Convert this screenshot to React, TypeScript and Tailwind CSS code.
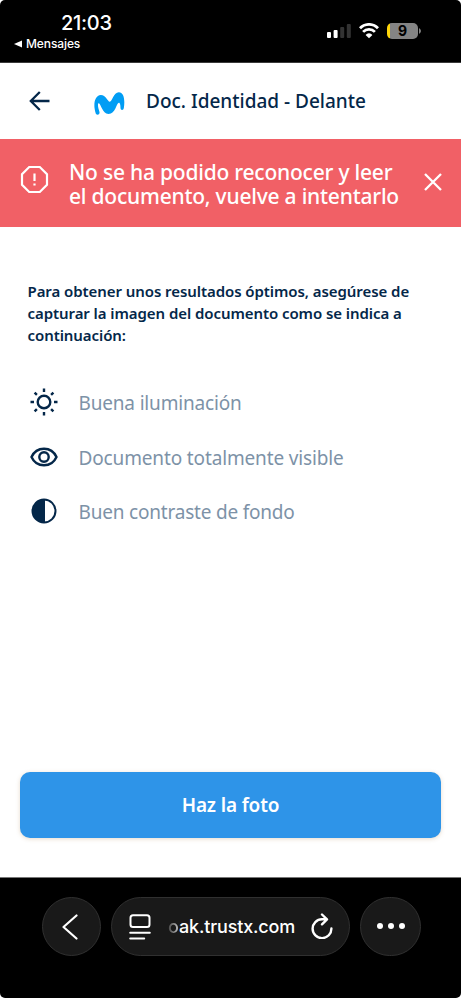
import React from "react";

interface TipProps {
	icon: React.ReactNode;
	label: string;
	tracking: string;
}

const StatusBar = () => {
	return (
		<div className="flex h-[63px] shrink-0 justify-between border-b border-[#3a3a3a] bg-black pl-[14px] pr-[40px] font-['Inter',sans-serif] text-white">
			<div className="flex flex-col pt-[12px]">
				<p className="pl-[47px] text-[20px] font-medium leading-[23px] tracking-[-0.3px]">21:03</p>
				<div className="flex items-center gap-[4px] pt-[1px]">
					<svg width="8" height="8" viewBox="0 0 8 8" fill="white">
						<path d="M0 4 8 .5v7z" />
					</svg>
					<p className="text-[12px] font-medium leading-[16px] tracking-[-0.1px]">Mensajes</p>
				</div>
			</div>
			<div className="flex h-[16px] items-center mt-[23px]">
				<svg width="24" height="16" viewBox="0 0 24 16">
					<rect x="0" y="9" width="4" height="6" rx="1" fill="white" />
					<rect x="6.6" y="7" width="4" height="8" rx="1" fill="white" />
					<rect x="13.2" y="4" width="4" height="11" rx="1" fill="#333" />
					<rect x="19.8" y="1" width="4" height="14" rx="1" fill="#333" />
				</svg>
				<svg className="ml-[8px]" width="20" height="16" viewBox="0 0 20 16">
					<path d="M1 5.2a12.5 12.5 0 0 1 18 0M4.1 8.9a8.2 8.2 0 0 1 11.8 0" fill="none" stroke="white" strokeWidth="2.8" />
					<path d="M10 15.2 6.6 11.9a4.5 4.5 0 0 1 6.8 0z" fill="white" />
				</svg>
				<div className="ml-[8px] flex h-[16px] w-[31px] items-center justify-center overflow-hidden rounded-[5px] bg-linear-to-r from-[#ffd60a] from-[3px] to-[#848484] to-[3px] text-[14px] font-bold leading-none text-black">
					9
				</div>
				<svg className="ml-[1px]" width="2" height="6" viewBox="0 0 2 6" fill="#848484">
					<path d="M0 0q4 3 0 6z" />
				</svg>
			</div>
		</div>
	);
};

const Header = () => {
	return (
		<header className="flex h-[76px] shrink-0 items-center pl-[29px] text-[#042749]">
			<svg width="21" height="20" viewBox="0 0 21 20" fill="none" stroke="currentColor" strokeWidth="2.3">
				<path d="M20.5 10H2M10.8 1 1.8 10l9 9" />
			</svg>
			<svg className="ml-[44px] mt-[5px]" width="31" height="23" viewBox="282 83 92 69" fill="#019df4">
				<path d="M283 130C281 110 287 93 302 92C317 92 322 112 329 112C336 112 340 85 356 84C371 84 375 106 371 131C370 139 361 138 361 131C361 123 360 115 356 115C349 115 346 149 325 149C306 149 302 117 296 117C291 117 294 130 298 143C299 151 291 154 287 148C285 143 284 137 283 130Z" />
			</svg>
			<h1 className="ml-[21px] whitespace-nowrap text-[19px] font-medium leading-[24px]">Doc. Identidad - Delante</h1>
		</header>
	);
};

const ErrorBanner = () => {
	return (
		<div className="flex h-[88px] shrink-0 bg-[#f16066] text-white">
			<svg className="ml-[20px] mt-[26px]" width="29" height="29" viewBox="0 0 29 29" fill="none" stroke="white" strokeWidth="2.2">
				<path d="M9.2 2h10.6l7.2 7.2v10.6l-7.2 7.2H9.2L2 19.8V9.2z" />
				<path d="M14.5 8.5v7.5M14.5 18.6v2" />
			</svg>
			<p className="ml-[20px] mt-[20.5px] w-[335px] whitespace-nowrap text-[21px] font-medium leading-[24.5px] tracking-[-0.22px]">
				No se ha podido reconocer y leer
				<br />
				el documento, vuelve a intentarlo
			</p>
			<svg className="ml-[20px] mt-[34px]" width="18" height="18" viewBox="0 0 18 18" stroke="white" strokeWidth="2.3">
				<path d="M1 1l16 16M17 1 1 17" />
			</svg>
		</div>
	);
};

const Tip = ({ icon, label, tracking }: TipProps) => {
	return (
		<li className="flex h-[54.5px] items-center">
			<div className="flex w-[28px] justify-center text-[#042749]">{icon}</div>
			<p className={`ml-[20.5px] whitespace-nowrap pt-[2px] text-[19px] text-[#7d92a7] ${tracking}`}>{label}</p>
		</li>
	);
};

const SunIcon = () => (
	<svg width="28" height="28" viewBox="0 0 28 28" fill="none" stroke="currentColor" strokeWidth="2.4">
		<circle cx="14" cy="14" r="6.3" />
		<path d="M14 .5v3.5M14 24v3.5M.5 14H4M24 14h3.5M4.6 4.6l2.3 2.3M21.1 21.1l2.3 2.3M4.6 23.4l2.3-2.3M21.1 6.9l2.3-2.3" />
	</svg>
);

const EyeIcon = () => (
	<svg width="28" height="20" viewBox="0 0 28 20" fill="none" stroke="currentColor" strokeWidth="2.4">
		<path d="M1.5 10C4 4.5 8.7 1.7 14 1.7S24 4.5 26.5 10C24 15.5 19.3 18.3 14 18.3S4 15.5 1.5 10z" />
		<circle cx="14" cy="10" r="4.7" />
	</svg>
);

const ContrastIcon = () => (
	<svg width="26" height="26" viewBox="0 0 26 26">
		<circle cx="13" cy="13" r="11.5" fill="none" stroke="currentColor" strokeWidth="2" />
		<path d="M14 1.5H13a11.5 11.5 0 0 0 0 23h1z" fill="currentColor" />
	</svg>
);

const BrowserBar = () => {
	return (
		<div className="flex h-[121px] shrink-0 items-start gap-[10px] border-t border-[#777] bg-black pl-[42px] pt-[19px] font-['Inter',sans-serif] text-white">
			<button className="flex h-[59px] w-[59px] items-center justify-center rounded-full border border-[#303030] bg-[#191919]">
				<svg className="-ml-[4px]" width="16" height="26" viewBox="0 0 16 26" fill="none" stroke="white" strokeWidth="2.2" strokeLinecap="round" strokeLinejoin="round">
					<path d="M14.5 1.5 1.5 13l13 11.5" />
				</svg>
			</button>
			<div className="flex h-[59px] w-[239px] items-center rounded-full border border-[#303030] bg-[#191919] pl-[17px]">
				<svg width="22" height="26" viewBox="0 0 22 26" fill="none" stroke="white" strokeWidth="2" strokeLinecap="round">
					<rect x="1.5" y="1.2" width="19" height="11.8" rx="2.5" />
					<path d="M1.2 18.8h19.6M1.2 24.5h14" />
				</svg>
				<p className="ml-[17px] w-[128px] whitespace-nowrap text-[18px] font-medium tracking-[-0.15px]">
					<span className="bg-linear-to-r from-[#444] to-[#ccc] bg-clip-text text-transparent">o</span>ak.trustx.com
				</p>
				<svg className="-mt-[2px] ml-[15px]" width="22" height="26" viewBox="0 0 22 26" fill="none" stroke="white" strokeWidth="2.4" strokeLinecap="round" strokeLinejoin="round">
					<path d="M15.5 6.3H11A9.4 9.4 0 1 0 20.4 15.5M11 1.5l5 4.8-5 5" />
				</svg>
			</div>
			<button className="flex h-[59px] w-[61px] items-center justify-center gap-[5px] rounded-full border border-[#303030] bg-[#191919] pb-[1px]">
				<span className="h-[6px] w-[6px] rounded-full bg-white" />
				<span className="h-[6px] w-[6px] rounded-full bg-white" />
				<span className="h-[6px] w-[6px] rounded-full bg-white" />
			</button>
		</div>
	);
};

const App = () => {
	return (
		<div className="flex h-[998px] w-[461px] flex-col overflow-hidden rounded-[5px] bg-white font-['Noto_Sans',sans-serif]">
			<StatusBar />
			<Header />
			<ErrorBanner />
			<main className="flex flex-1 flex-col">
				<div className="ml-[27.5px] mt-[53px] whitespace-nowrap text-[15px] font-semibold leading-[22px] tracking-[-0.07px] text-[#042749]">
					<p>Para obtener unos resultados óptimos, asegúrese de</p>
					<p>capturar la imagen del documento como se indica a</p>
					<p>continuación:</p>
				</div>
				<ul className="ml-[30px] mt-[29px]">
					<Tip icon={<SunIcon />} label="Buena iluminación" tracking="tracking-[-0.17px]" />
					<Tip icon={<EyeIcon />} label="Documento totalmente visible" tracking="tracking-[-0.14px]" />
					<Tip icon={<ContrastIcon />} label="Buen contraste de fondo" tracking="tracking-[-0.2px]" />
				</ul>
				<button className="mx-[20px] mb-[39px] mt-auto h-[66px] rounded-[10px] bg-[#2e94e8] pt-[1px] text-[19px] font-semibold tracking-[-0.15px] text-white shadow-[0_1px_4px_rgba(160,110,50,0.25)]">
					Haz la foto
				</button>
			</main>
			<BrowserBar />
		</div>
	);
};

export default App;
